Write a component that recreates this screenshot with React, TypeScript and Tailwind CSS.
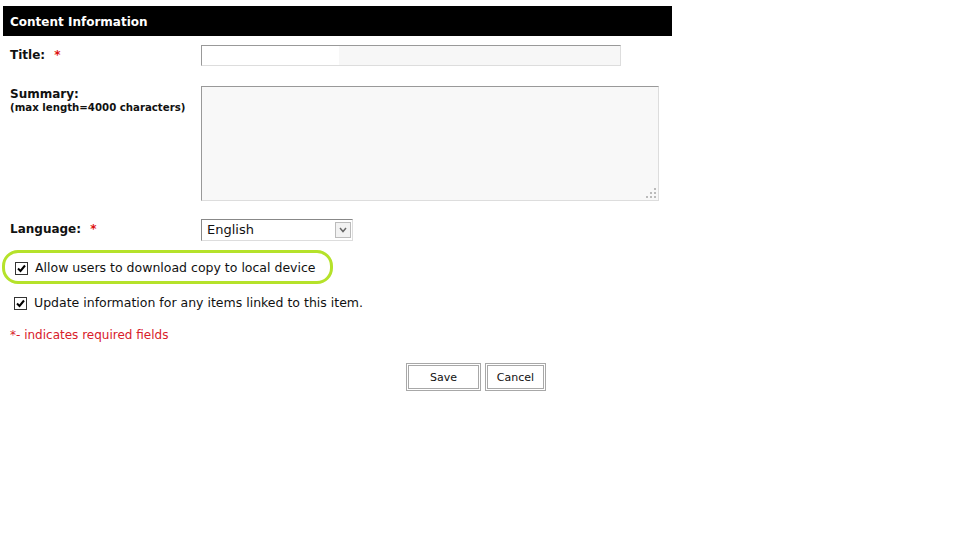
import React from "react";

const verdana = { fontFamily: '"DejaVu Sans", Verdana, sans-serif' };

function Check() {
  return (
    <span className="inline-flex h-[13px] w-[13px] shrink-0 items-center justify-center border border-[#333] bg-white">
      <svg width="9" height="9" viewBox="0 0 9 9">
        <path d="M1 4.5 L3.5 7 L8 1.5" fill="none" stroke="#000" strokeWidth="2" />
      </svg>
    </span>
  );
}

export default function App() {
  return (
    <div className="h-[540px] w-[960px] bg-white" style={verdana}>
      <div className="w-[669px] pl-[3px] pt-[6px]">
        <div className="flex h-[30px] w-[669px] items-center bg-black pl-[7px] pt-[2px] text-[12px] font-bold text-white">
          Content Information
        </div>

        <div className="mt-[9px] grid grid-cols-[198px_1fr]">
          <div className="pl-[7px] pt-[1px] text-[12px] font-bold text-[#111]">
            Title: <span className="ml-[5px] text-[#d11]">*</span>
          </div>
          <div className="flex h-[21px] w-[420px] border border-[#999] border-b-[#ddd] border-r-[#ddd] bg-[#f7f7f7]">
            <div className="h-full w-[137px] bg-white" />
          </div>
        </div>

        <div className="mt-[20px] grid grid-cols-[198px_1fr]">
          <div className="pl-[7px] pt-[1px] text-[#111]">
            <div className="text-[12px] font-bold leading-[14px]">Summary:</div>
            <div className="text-[10.2px] font-bold leading-[13px]">(max length=4000 characters)</div>
          </div>
          <div className="relative h-[115px] w-[458px] border border-[#999] border-b-[#ddd] border-r-[#ddd] bg-[#f8f8f8]">
            <svg className="absolute bottom-[2px] right-[2px]" width="10" height="10" viewBox="0 0 10 10">
              <rect x="8" y="0" width="2" height="2" fill="#bbb" />
              <rect x="4" y="4" width="2" height="2" fill="#bbb" />
              <rect x="8" y="4" width="2" height="2" fill="#bbb" />
              <rect x="0" y="8" width="2" height="2" fill="#bbb" />
              <rect x="4" y="8" width="2" height="2" fill="#bbb" />
              <rect x="8" y="8" width="2" height="2" fill="#bbb" />
            </svg>
          </div>
        </div>

        <div className="mt-[18px] grid grid-cols-[198px_1fr]">
          <div className="pl-[7px] pt-[1px] text-[12px] font-bold text-[#111]">
            Language: <span className="ml-[5px] text-[#d11]">*</span>
          </div>
          <div className="flex h-[22px] w-[152px] items-center border border-[#888] border-b-[#ddd] border-r-[#ddd] bg-white">
            <span className="flex-1 pl-[5px] text-[13px] text-[#111]">English</span>
            <span className="mr-[1px] flex h-[16px] w-[16px] items-center justify-center border border-[#bbb] bg-[#f2f2f2]">
              <svg width="8" height="6" viewBox="0 0 8 6">
                <path d="M1 1 L4 4.5 L7 1" fill="none" stroke="#666" strokeWidth="1.5" />
              </svg>
            </span>
          </div>
        </div>

        <div className="-ml-[1px] mt-[9px] flex h-[34px] w-[331px] items-center gap-[7px] rounded-[16px] border-[3px] border-[#b5e22a] pl-[10px] pt-[2px] text-[12.5px] text-[#111]">
          <Check />
          <span>Allow users to download copy to local device</span>
        </div>

        <div className="mt-[7px] flex h-[24px] items-center gap-[7px] pl-[11px] text-[12.5px] text-[#111]">
          <Check />
          <span>Update information for any items linked to this item.</span>
        </div>

        <div className="mt-[11px] pl-[7px] text-[12px] text-[#d8202a]">*- indicates required fields</div>

        <div className="mt-[19px] flex gap-[4px] pl-[403px]">
          <button className="h-[28px] w-[75px] border-[3px] border-double border-[#a8a8a8] bg-white pt-[2px] text-[11px] text-[#111]">
            Save
          </button>
          <button className="h-[28px] w-[61px] border-[3px] border-double border-[#a8a8a8] bg-white pt-[2px] text-[11px] text-[#111]">
            Cancel
          </button>
        </div>
      </div>
    </div>
  );
}
